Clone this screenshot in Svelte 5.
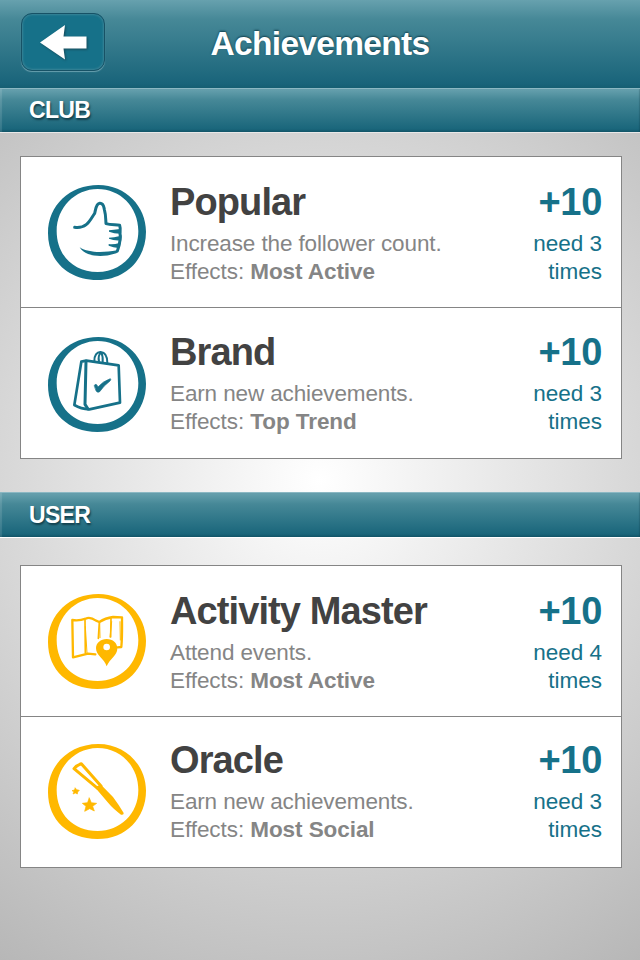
<script>
  const sections = [
    {
      name: 'CLUB',
      kind: 'club',
      items: [
        { title: 'Popular', text: 'Increase the follower count.', effect: 'Most Active', need: 3, icon: 'thumb', iconTop: 28, textTop: 20 },
        { title: 'Brand', text: 'Earn new achievements.', effect: 'Top Trend', need: 3, icon: 'bag', iconTop: 29, textTop: 19 }
      ]
    },
    {
      name: 'USER',
      kind: 'user',
      items: [
        { title: 'Activity Master', text: 'Attend events.', effect: 'Most Active', need: 4, icon: 'map', iconTop: 28, textTop: 20 },
        { title: 'Oracle', text: 'Earn new achievements.', effect: 'Most Social', need: 3, icon: 'wand', iconTop: 27, textTop: 18 }
      ]
    }
  ];
</script>

<div class="screen">
  <header class="top">
    <button class="back" aria-label="Back">
      <svg width="50" height="38" viewBox="0 0 50 38"><path d="M0 18.5 L25 1 L23.5 12.5 H46.5 V24.5 H23.5 L25 35.5 Z" fill="#fff" /></svg>
    </button>
    <h1>Achievements</h1>
  </header>

  {#each sections as section}
    <section class={section.kind}>
      <h2>{section.name}</h2>
      <div class="card">
        {#each section.items as item}
          <article class="row">
            <svg class="icon" style="margin-top:{item.iconTop}px" width="98" height="95" viewBox="24 27 294 285" fill="none" stroke="currentColor" stroke-linecap="round" stroke-linejoin="round">
              <path fill="currentColor" stroke="none" fill-rule="evenodd" d="M175 27 C258 27 318 92 318 167 C318 249 258 312 172 312 C85 312 24 255 24 172 C24 87 90 27 175 27Z M173 39 C105 39 50 95 50 165 C50 237 100 288 173 288 C240 288 295 237 295 165 C295 92 240 39 173 39Z" />
              {#if item.icon === 'thumb'}
                <g transform="translate(0 -3)">
                  <path stroke-width="9" d="M104 157 C142 162 151 133 164 115 C167 104 168 86 179 85 C191 84 191 94 193 103 C198 121 197 134 198 146 C212 150 226 149 239 151 C242 159 241 166 240 177 C243 185 241 193 239 201 C239 209 236 216 232 228" />
                  <path fill="currentColor" stroke="none" d="M207 166 Q220 164 240 162 L240 176 Q222 176 207 170Z M207 188 Q221 188 240 183 L239 196 Q221 197 207 191Z M206 207 Q221 209 238 204 L235 219 Q220 218 206 212Z" />
                  <path fill="currentColor" stroke="none" d="M119 217 C145 234 188 234 231 226 Q238 230 229 235 C191 248 137 247 119 217Z" />
                </g>
              {:else if item.icon === 'bag'}
                <path stroke-width="8" d="M124 101 L139 98 L236 112 L240 224 L148 244 Q123 243 103 231 L124 101Z" />
                <path stroke-width="9" d="M138 100 L135 229 L144 243" />
                <path stroke-width="6" d="M163 100 C162 83 171 71 182 72 C196 73 202 88 202 105 M177 100 C174 89 177 76 184 74 M188 103 C189 88 185 76 184 74" />
                <path fill="currentColor" stroke="currentColor" stroke-width="2" d="M163 172 Q169 164 174 177 Q188 160 211 152 Q214 154 210 159 Q191 173 179 191 Q173 195 169 190Z" />
              {:else if item.icon === 'map'}
                <path stroke-width="7" d="M166 208 L144 206 L99 217 L97 105 Q118 108 137 101 Q150 94 168 107 L178 111 Q196 99 219 96 L246 97 C246 130 247 155 244 186 L233 187" />
                <path stroke-width="5" d="M135 105 L136 204 M178 112 L175 160 M213 101 L212 156" />
                <path stroke-width="3" d="M136 125 L141 204 M179 114 L180 158 M215 110 L210 156 M240 110 L241 165" />
                <path fill="currentColor" stroke="none" fill-rule="evenodd" d="M200 244 C192 220 168 211 168 190 C168 174 182 162 200 162 C219 162 232 174 232 191 C232 211 209 221 200 244Z M200 176 A10 10 0 1 0 200 196 A10 10 0 1 0 200 176Z" />
              {:else}
                <path stroke-width="9" d="M102 101 Q110 91 124 86 L183 153 L173 160 L102 101Z" />
                <path fill="currentColor" stroke="none" d="M164 156 L183 149 L219 186 Q237 210 251 234 Q252 241 243 239 Q218 220 205 204Z" />
                <path fill="currentColor" stroke="currentColor" stroke-width="2" d="M148 189 L154 203 L170 205 L158 214 L163 228 L149 221 L134 229 L138 214 L127 205 L142 203Z M106 159 L110 164 L118 166 L113 171 L112 177 L106 174 L99 177 L102 170 L96 167 L103 165Z" />
              {/if}
            </svg>
            <div class="info" style="padding-top:{item.textTop}px">
              <h3>{item.title}</h3>
              <p>{item.text}</p>
              <p class="effect">Effects: <b>{item.effect}</b></p>
            </div>
            <div class="score" style="padding-top:{item.textTop}px">
              <strong>+10</strong>
              <p>need {item.need}</p>
              <p>times</p>
            </div>
          </article>
        {/each}
      </div>
    </section>
  {/each}
</div>

<style>
  :global(body) { margin: 0; }
  .screen {
    box-sizing: border-box;
    width: 640px;
    height: 960px;
    overflow: hidden;
    font-family: 'Liberation Sans', Arial, sans-serif;
    background: radial-gradient(circle farthest-corner at 320px 480px, #fff, #b7b7b7);
  }
  h1, h2, h3, p { margin: 0; }
  .top {
    box-sizing: border-box;
    height: 88px;
    display: grid;
    grid-template-columns: 1fr auto 1fr;
    align-items: start;
    padding: 13px 0 0 21px;
    background: linear-gradient(#67a1ae 0%, #468897 22%, #19647a 95%, #155e72 100%);
  }
  .back {
    box-sizing: border-box;
    width: 84px;
    height: 58px;
    padding: 10px 0 0 18px;
    border: 1px solid #175266;
    border-radius: 11px;
    background: #167189;
    box-shadow: inset 0 0 2px 1px #3a8497, 0 1px 1px #69a0ae;
    display: flex;
  }
  .back svg { display: block; filter: drop-shadow(1px 1px 1px #174958); }
  h1 {
    margin-left: -21px;
    padding-top: 11px;
    font-size: 33.5px;
    line-height: 40px;
    letter-spacing: -0.7px;
    color: #fff;
    text-shadow: 0 -1px 2px #123f4c;
  }
  h2 {
    box-sizing: border-box;
    height: 45px;
    padding-left: 29px;
    font-size: 23px;
    line-height: 43px;
    letter-spacing: -0.7px;
    color: #fff;
    text-shadow: 1px 2px 2px #123f4c;
    background: linear-gradient(#67a1ae, #468897 25%, #1a667b 93%, #115468 100%);
    box-shadow: inset 2px 0 1px rgba(255, 255, 255, 0.13), inset -1px 0 1px rgba(0, 40, 50, 0.2);
    border-top: 1px solid #8bb8c3;
    border-bottom: 1px solid #e8e8e8;
  }
  .user h2 { height: 46px; padding-top: 1px; border-bottom-color: #fff; }
  .card {
    box-sizing: border-box;
    width: 602px;
    height: 303px;
    margin: 23px 0 33px 20px;
    border: 1px solid #858585;
    background: #fff;
  }
  .user .card { margin-top: 27px; }
  .row {
    box-sizing: border-box;
    height: 150px;
    padding: 0 19px 0 27px;
    display: flex;
    align-items: flex-start;
  }
  .row + .row { border-top: 1px solid #858585; height: 151px; }
  .icon { flex: none; color: #167189; }
  .user .icon { color: #ffb800; }
  .info { flex: 1; margin-left: 24px; color: #858585; }
  h3, strong {
    display: block;
    font-size: 38px;
    line-height: 50px;
    font-weight: 700;
  }
  h3 { color: #424242; letter-spacing: -0.9px; }
  p { font-size: 22.5px; line-height: 28px; letter-spacing: -0.13px; }
  .effect { letter-spacing: -0.07px; }
  h3 + p, strong + p { margin-top: 3px; }
  .score { text-align: right; color: #167189; }
  .score p { letter-spacing: 0; }
  strong { letter-spacing: -0.3px; }
</style>
